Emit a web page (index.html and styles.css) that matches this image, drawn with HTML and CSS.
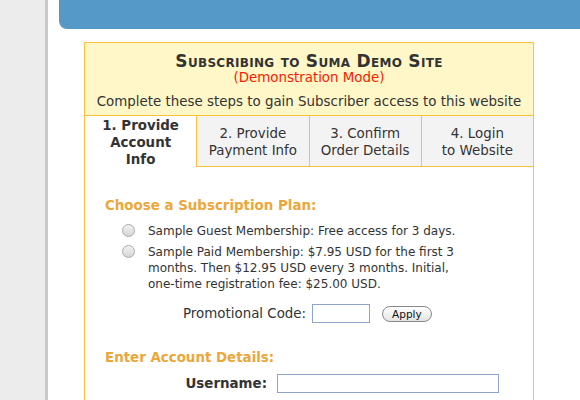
FILE: index.html
```html
<!DOCTYPE html>
<html>
<head>
<meta charset="utf-8">
<link rel="stylesheet" href="styles.css">
</head>
<body>
<div class="page">
  <div class="side"></div>
  <div class="main">
    <div class="topbar"></div>
    <div class="box">
      <div class="head">
        <div class="title">Subscribing to Suma Demo Site</div>
        <div class="demo">(Demonstration Mode)</div>
        <div class="intro">Complete these steps to gain Subscriber access to this website</div>
      </div>
      <div class="tabs">
        <div class="tab active">1. Provide<br>Account<br>Info</div>
        <div class="tab">2. Provide<br>Payment Info</div>
        <div class="tab">3. Confirm<br>Order Details</div>
        <div class="tab">4. Login<br>to Website</div>
      </div>
      <div class="body">
        <h3 class="sec">Choose a Subscription Plan:</h3>
        <div class="plans">
          <div class="plan"><span class="radio"></span><span class="ptext">Sample Guest Membership: Free access for 3 days.</span></div>
          <div class="plan"><span class="radio"></span><span class="ptext">Sample Paid Membership: $7.95 USD for the first 3 months. Then $12.95 USD every 3 months. Initial, one-time registration fee: $25.00 USD.</span></div>
        </div>
        <div class="promo">
          <span class="plabel">Promotional Code:</span>
          <span class="pinput"></span>
          <span class="apply">Apply</span>
        </div>
        <h3 class="sec sec2">Enter Account Details:</h3>
        <div class="field">
          <span class="flabel">Username:</span>
          <span class="finput"></span>
        </div>
      </div>
    </div>
  </div>
</div>
</body>
</html>
```
FILE: styles.css
```css
html, body {
  margin: 0;
  padding: 0;
  background: #fff;
}
body {
  font-family: "DejaVu Sans", Verdana, sans-serif;
  font-size: 13.4px;
  color: #333;
}
.page {
  display: flex;
  width: 580px;
  height: 400px;
  overflow: hidden;
}
.side {
  width: 45px;
  flex: none;
  background: #ececec;
  border-right: 3px solid #c8c8c8;
  box-shadow: 1px 0 1px #e0e0e0;
}
.main {
  flex: 1;
  background: #fff;
}
.topbar {
  margin-left: 11px;
  height: 29px;
  background: #5499c8;
  border-bottom-left-radius: 8px;
}
.box {
  margin: 13px 0 0 36px;
  width: 448px;
  border: 1px solid #f8c33a;
  border-bottom: none;
  height: 400px;
}
.head {
  background: #fff7c8;
  text-align: center;
  padding: 9px 0 5px;
}
.title {
  font-weight: bold;
  font-variant: small-caps;
  font-size: 17px;
  line-height: 18px;
  color: #333;
  letter-spacing: 0.3px;
}
.demo {
  color: #f51d00;
  line-height: 16px;
}
.intro {
  margin-top: 8px;
  line-height: 16px;
}
.tabs {
  display: flex;
  height: 51px;
  border-top: 1px solid #f8c33a;
}
.tab {
  flex: 1;
  text-align: center;
  background: #f3f3f3;
  border-left: 1px solid #f8c33a;
  border-bottom: 1px solid #f8c33a;
  line-height: 17px;
  padding-top: 9px;
  box-sizing: border-box;
}
.tab.active {
  background: #fff;
  border-left: none;
  border-bottom: none;
  font-weight: bold;
  padding-top: 1px;
}
.body {
  padding: 31px 0 0 20px;
}
.sec {
  margin: 0;
  font-size: 13.4px;
  font-weight: bold;
  color: #eca73a;
  line-height: 16px;
}
.plans {
  margin-top: 9px;
  padding-left: 17px;
}
.plan {
  display: flex;
  margin-bottom: 5px;
  line-height: 16px;
  font-size: 12px;
}
.radio {
  flex: none;
  width: 11px;
  height: 11px;
  border: 1px solid #aaa;
  border-radius: 50%;
  background: linear-gradient(#f2f2f2, #d6d6d6);
  margin: 1px 13px 0 0;
}
.ptext {
  width: 320px;
}
.promo {
  display: flex;
  align-items: center;
  margin-top: 12px;
  padding-left: 78px;
}
.plabel {
  margin-right: 6px;
}
.pinput {
  width: 56px;
  height: 17px;
  border: 1px solid #8fa4cc;
  margin-right: 12px;
}
.apply {
  font-size: 10.5px;
  line-height: 14px;
  padding: 0 9px;
  border: 1px solid #888;
  border-radius: 8px;
  background: linear-gradient(#fff, #e4e4e4);
  color: #111;
}
.sec2 {
  margin-top: 27px;
}
.field {
  display: flex;
  align-items: center;
  margin-top: 8px;
}
.flabel {
  width: 162px;
  text-align: right;
  font-weight: bold;
  margin-right: 10px;
}
.finput {
  width: 220px;
  height: 17px;
  border: 1px solid #8fa4cc;
}
```
